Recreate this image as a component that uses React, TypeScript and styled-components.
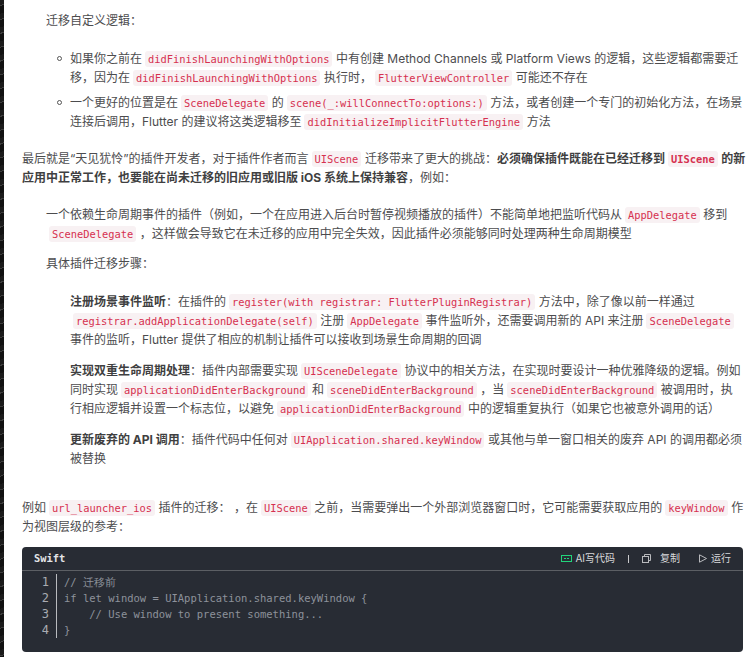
import styled, { createGlobalStyle } from "styled-components";

const GlobalStyle = createGlobalStyle`
    html, body {
        margin: 0;
        padding: 0;
        background: #fff;
    }
`;

const Page = styled.div`
    display: flex;
    width: 753px;
    height: 657px;
    overflow: hidden;
`;

const Edge = styled.div`
    flex: 0 0 4px;
    background: repeating-linear-gradient(160deg, #1b1b1b 0 5px, #3c3c3c 5px 6px, #111 6px 13px);
`;

const Article = styled.article`
    flex: 1;
    padding: 11px 0 0 18px;
    color: #4c4c4e;
    font-family: Inter, "Noto Sans CJK SC", sans-serif;
    font-size: 12px;
    line-height: 19px;
    white-space: nowrap;
`;

const Para = styled.p<{ $indent?: number; $top?: number }>`
    margin: ${(p) => p.$top ?? 0}px 0 0 ${(p) => p.$indent ?? 0}px;
`;

const BulletList = styled.ul`
    list-style: none;
    margin: 19px 0 0 24px;
    padding: 0 0 0 24px;
`;

const Bullet = styled.li`
    position: relative;
    margin-bottom: 6px;

    &::before {
        content: "";
        position: absolute;
        left: -13px;
        top: 7px;
        width: 3px;
        height: 3px;
        border: 1px solid #555;
        border-radius: 50%;
    }
`;

const Code = styled.code`
    font-family: "DejaVu Sans Mono", monospace;
    font-size: 10.4px;
    line-height: 1;
    color: #d6304f;
    background: #f8f1f3;
    border-radius: 3px;
    padding: 2px 3px;
    margin: 0 3.5px 0 3px;
`;

const Strong = styled.strong`
    font-weight: 700;
    color: #3f3f41;
`;

const CodeBlock = styled.div`
    margin: 11px 0 0 0;
    width: 721px;
    height: 105px;
    border-radius: 4px;
    background: #282c34;
    overflow: hidden;
`;

const CodeHeader = styled.div`
    display: flex;
    align-items: center;
    height: 23px;
    padding: 0 12px 0 12px;
    border-bottom: 1px solid #5c5f64;
    color: #d8d9db;
    font-size: 10px;
`;

const Lang = styled.span`
    flex: 1;
    font-family: "DejaVu Sans Mono", monospace;
    font-weight: 700;
    font-size: 10.4px;
    color: #e4e5e7;
`;

const Action = styled.span<{ $gap?: number; $iconGap?: number }>`
    display: inline-flex;
    align-items: center;
    gap: ${(p) => p.$iconGap ?? 3}px;
    margin-left: ${(p) => p.$gap ?? 0}px;
`;

const Divider = styled.span`
    width: 1px;
    height: 8px;
    margin-left: 13px;
    background: #c9cacc;
`;

const CodeBody = styled.div`
    display: flex;
    padding-top: 3px;
    font-family: "DejaVu Sans Mono", monospace;
    font-size: 10.5px;
    line-height: 16px;
`;

const Gutter = styled.div`
    width: 35px;
    height: 64px;
    padding-right: 7px;
    box-sizing: border-box;
    text-align: right;
    font-size: 12px;
    color: #a9acb2;
    border-right: 1px solid #b9bbbf;
`;

const CodeLines = styled.pre`
    margin: 0 0 0 7px;
    font: inherit;
    color: #8d929b;
`;

const AiIcon = () => (
    <svg width="11" height="7" viewBox="0 0 11 7">
        <rect x="0.5" y="0.5" width="10" height="6" fill="none" stroke="#22d47b" />
        <rect x="3" y="3" width="2" height="1" fill="#22d47b" />
        <rect x="6" y="3" width="2" height="1" fill="#22d47b" />
    </svg>
);

const CopyIcon = () => (
    <svg width="9" height="9" viewBox="0 0 9 9" fill="none" stroke="#b9babd">
        <rect x="0.5" y="2.5" width="6" height="6" />
        <path d="M2.5 2.5V0.5H8.5V6.5H6.5" />
    </svg>
);

const RunIcon = () => (
    <svg width="8" height="9" viewBox="0 0 8 9" fill="none" stroke="#b9babd">
        <path d="M0.5 0.8L7.5 4.5L0.5 8.2Z" />
    </svg>
);

export default function App() {
    return (
        <Page>
            <GlobalStyle />
            <Edge />
            <Article>
                <Para $indent={24}>迁移自定义逻辑：</Para>
                <BulletList>
                    <Bullet>
                        如果你之前在<Code>didFinishLaunchingWithOptions</Code>中有创建 Method Channels 或 Platform Views 的逻辑，这些逻辑都需要迁
                        <br />
                        移，因为在<Code>didFinishLaunchingWithOptions</Code>执行时，<Code>FlutterViewController</Code>可能还不存在
                    </Bullet>
                    <Bullet>
                        一个更好的位置是在<Code>SceneDelegate</Code>的<Code>scene(_:willConnectTo:options:)</Code>方法，或者创建一个专门的初始化方法，在场景
                        <br />
                        连接后调用，Flutter 的建议将这类逻辑移至<Code>didInitializeImplicitFlutterEngine</Code>方法
                    </Bullet>
                </BulletList>
                <Para $top={18}>
                    最后就是“天见犹怜”的插件开发者，对于插件作者而言<Code>UIScene</Code>迁移带来了更大的挑战：
                    <Strong>必须确保插件既能在已经迁移到<Code>UIScene</Code>的新</Strong>
                    <br />
                    <Strong>应用中正常工作，也要能在尚未迁移的旧应用或旧版 iOS 系统上保持兼容</Strong>，例如：
                </Para>
                <Para $indent={24} $top={18}>
                    一个依赖生命周期事件的插件（例如，一个在应用进入后台时暂停视频播放的插件）不能简单地把监听代码从<Code>AppDelegate</Code>移到
                    <br />
                    <Code>SceneDelegate</Code>，这样做会导致它在未迁移的应用中完全失效，因此插件必须能够同时处理两种生命周期模型
                </Para>
                <Para $indent={24} $top={11}>具体插件迁移步骤：</Para>
                <Para $indent={48} $top={19}>
                    <Strong>注册场景事件监听</Strong>：在插件的<Code>register(with registrar: FlutterPluginRegistrar)</Code>方法中，除了像以前一样通过
                    <br />
                    <Code>registrar.addApplicationDelegate(self)</Code>注册<Code>AppDelegate</Code>事件监听外，还需要调用新的 API 来注册<Code>SceneDelegate</Code>
                    <br />
                    事件的监听，Flutter 提供了相应的机制让插件可以接收到场景生命周期的回调
                </Para>
                <Para $indent={48} $top={12}>
                    <Strong>实现双重生命周期处理</Strong>：插件内部需要实现<Code>UISceneDelegate</Code>协议中的相关方法，在实现时要设计一种优雅降级的逻辑。例如
                    <br />
                    同时实现<Code>applicationDidEnterBackground</Code>和<Code>sceneDidEnterBackground</Code>，当<Code>sceneDidEnterBackground</Code>被调用时，执
                    <br />
                    行相应逻辑并设置一个标志位，以避免<Code>applicationDidEnterBackground</Code>中的逻辑重复执行（如果它也被意外调用的话）
                </Para>
                <Para $indent={48} $top={12}>
                    <Strong>更新废弃的 API 调用</Strong>：插件代码中任何对<Code>UIApplication.shared.keyWindow</Code>或其他与单一窗口相关的废弃 API 的调用都必须
                    <br />
                    被替换
                </Para>
                <Para $top={30}>
                    例如<Code>url_launcher_ios</Code>插件的迁移：&nbsp;，在<Code>UIScene</Code>之前，当需要弹出一个外部浏览器窗口时，它可能需要获取应用的<Code>keyWindow</Code>作
                    <br />
                    为视图层级的参考：
                </Para>
                <CodeBlock>
                    <CodeHeader>
                        <Lang>Swift</Lang>
                        <Action><AiIcon />AI写代码</Action>
                        <Divider />
                        <Action $gap={13} $iconGap={9}><CopyIcon />复制</Action>
                        <Action $gap={19} $iconGap={4}><RunIcon />运行</Action>
                    </CodeHeader>
                    <CodeBody>
                        <Gutter>1<br />2<br />3<br />4</Gutter>
                        <CodeLines>{`// 迁移前
if let window = UIApplication.shared.keyWindow {
    // Use window to present something...
}`}</CodeLines>
                    </CodeBody>
                </CodeBlock>
            </Article>
        </Page>
    );
}
